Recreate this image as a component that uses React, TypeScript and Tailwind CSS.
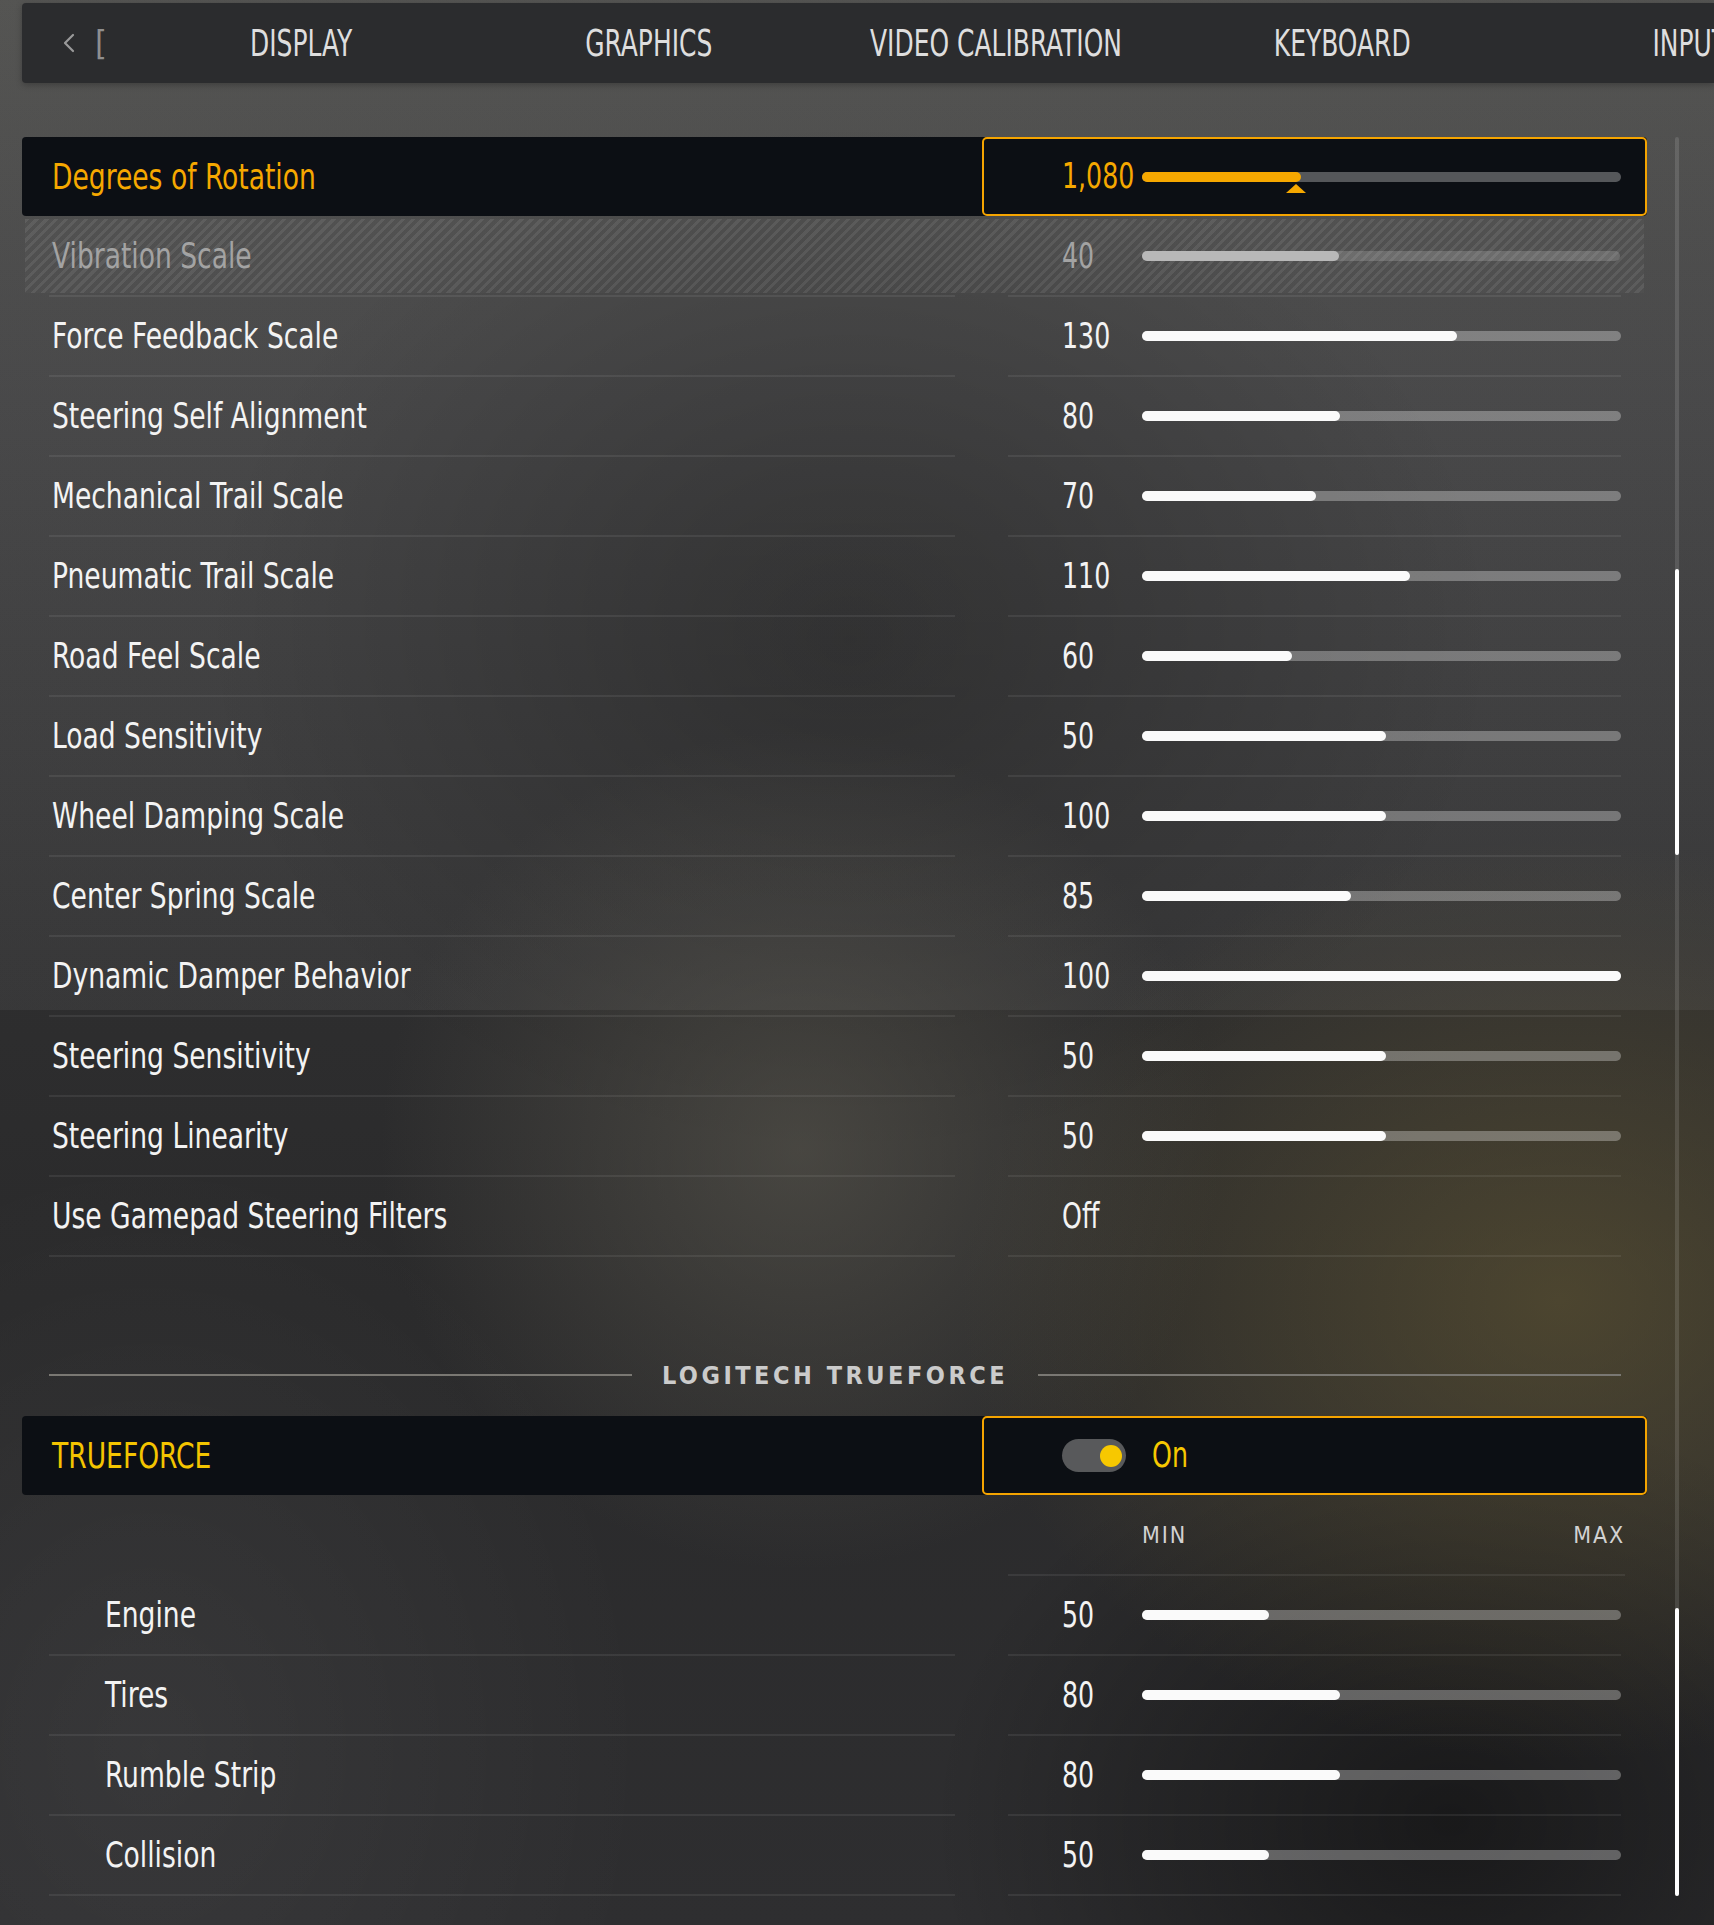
import React from "react";

const FONT = "font-['DejaVu_Sans_Condensed','DejaVu_Sans',sans-serif]";

type Item = { label: string; value: string; pct?: number };

const mainRows: Item[] = [
  { label: "Force Feedback Scale", value: "130", pct: 65.8 },
  { label: "Steering Self Alignment", value: "80", pct: 41.3 },
  { label: "Mechanical Trail Scale", value: "70", pct: 36.3 },
  { label: "Pneumatic Trail Scale", value: "110", pct: 55.9 },
  { label: "Road Feel Scale", value: "60", pct: 31.4 },
  { label: "Load Sensitivity", value: "50", pct: 51 },
  { label: "Wheel Damping Scale", value: "100", pct: 51 },
  { label: "Center Spring Scale", value: "85", pct: 43.7 },
  { label: "Dynamic Damper Behavior", value: "100", pct: 100 },
  { label: "Steering Sensitivity", value: "50", pct: 51 },
  { label: "Steering Linearity", value: "50", pct: 51 },
  { label: "Use Gamepad Steering Filters", value: "Off" },
];

const subRows: Item[] = [
  { label: "Engine", value: "50", pct: 26.5 },
  { label: "Tires", value: "80", pct: 41.4 },
  { label: "Rumble Strip", value: "80", pct: 41.3 },
  { label: "Collision", value: "50", pct: 26.5 },
];

function Label({ children, className = "" }: { children: React.ReactNode; className?: string }) {
  return (
    <span className={`inline-block origin-left scale-x-[0.82] whitespace-nowrap text-[36px] leading-none ${className}`}>
      {children}
    </span>
  );
}

function Value({ children, className = "" }: { children: React.ReactNode; className?: string }) {
  return (
    <span className={`inline-block origin-left scale-x-[0.78] whitespace-nowrap text-[36px] leading-none ${className}`}>
      {children}
    </span>
  );
}

function Track({ pct, fill = "bg-[#fafafa]", track = "bg-white/30" }: { pct: number; fill?: string; track?: string }) {
  return (
    <div className={`h-[10px] flex-1 rounded-full ${track}`}>
      <div className={`h-full rounded-full ${fill}`} style={{ width: `${pct}%` }} />
    </div>
  );
}

function Row({ item, indent = false }: { item: Item; indent?: boolean }) {
  return (
    <div className="flex h-[80px]">
      <div className="flex w-[960px] px-[27px]">
        <div
          className={`flex flex-1 items-center border-b-2 border-white/[0.07] ${indent ? "pl-[56px]" : "pl-[3px]"}`}
        >
          <Label className="text-[#f3f3f3]">{item.label}</Label>
        </div>
      </div>
      <div className="flex w-[665px] pl-[26px] pr-[26px]">
        <div className="flex flex-1 items-center border-b-2 border-white/[0.07] pl-[54px]">
          <div className="w-[80px]">
            <Value className="text-[#f3f3f3]">{item.value}</Value>
          </div>
          {item.pct !== undefined && <Track pct={item.pct} />}
        </div>
      </div>
    </div>
  );
}

function Chevron() {
  return (
    <svg width="14" height="20" viewBox="0 0 14 20" fill="none">
      <polyline points="11,2 3,10 11,18" stroke="#9a9a9a" strokeWidth="2.2" strokeLinecap="round" strokeLinejoin="round" />
    </svg>
  );
}

export default function App() {
  const tabs = ["DISPLAY", "GRAPHICS", "VIDEO CALIBRATION", "KEYBOARD", "INPUT"];
  return (
    <div
      className={`${FONT} relative h-[1925px] w-[1714px] overflow-hidden bg-[#2c2c2e] bg-[image:linear-gradient(180deg,rgba(255,255,255,0.06)_0px,rgba(255,255,255,0.05)_1010px,transparent_1010px),radial-gradient(600px_460px_at_1560px_1300px,rgba(110,96,52,0.5),transparent),radial-gradient(420px_420px_at_800px_1150px,rgba(95,92,82,0.55),transparent),radial-gradient(650px_520px_at_850px_640px,rgba(0,0,0,0.32),transparent),radial-gradient(520px_420px_at_1450px_1820px,rgba(0,0,0,0.45),transparent),radial-gradient(500px_600px_at_150px_1750px,rgba(255,255,255,0.05),transparent),linear-gradient(180deg,#4a4a48_0px,#3e3e3f_400px,#2e2e2f_950px,#2a2a2b_1300px,#2e2e30_1925px)]`}
    >
      {/* Tab bar */}
      <div className="ml-[22px] mt-[3px] flex h-[80px] items-center rounded-l-[4px] bg-[#2b2c2e] shadow-[0_2px_6px_rgba(0,0,0,0.25)]">
        <div className="flex w-[106px] shrink-0 items-center pl-[40px]">
          <Chevron />
          <span className="ml-[19px] text-[34px] leading-none text-[#8f8f8f]">[</span>
        </div>
        {tabs.map((t) => (
          <div key={t} className="flex w-[347px] shrink-0 justify-center">
            <span className="inline-block origin-center scale-x-[0.75] whitespace-nowrap text-[37px] leading-none text-[#dedede]">
              {t}
            </span>
          </div>
        ))}
      </div>

      {/* Main */}
      <div className="mt-[54px] flex">
        <div className="ml-[22px] flex w-[1625px] flex-col">
          {/* Degrees of Rotation (selected) */}
          <div className="flex h-[80px]">
            <div className="flex h-[79px] w-full rounded-[4px] bg-[#0c0f14]">
              <div className="flex w-[960px] items-center pl-[30px]">
                <Label className="text-[#f6a800]">Degrees of Rotation</Label>
              </div>
              <div className="flex flex-1 items-center rounded-[5px] border-2 border-[#f5a400] pl-[78px] pr-[24px]">
                <div className="w-[80px]">
                  <Value className="text-[#f6a800]">1,080</Value>
                </div>
                <div className="relative h-[10px] flex-1 rounded-full bg-white/30">
                  <div className="h-full rounded-full bg-[#f6a800]" style={{ width: "33.1%" }} />
                  <div
                    className="absolute top-[12px] h-0 w-0 border-x-[10px] border-b-[9px] border-x-transparent border-b-[#f6a800]"
                    style={{ left: "calc(33.1% - 15px)" }}
                  />
                </div>
              </div>
            </div>
          </div>

          {/* Vibration Scale (disabled) */}
          <div className="flex h-[80px] flex-col pt-[2px]">
            <div className="mx-[3px] flex h-[74px] items-center bg-white/[0.02] bg-[image:repeating-linear-gradient(135deg,rgba(255,255,255,0.075)_0px,rgba(255,255,255,0.075)_3px,transparent_3px,transparent_7px)]">
              <div className="w-[957px] pl-[27px]">
                <Label className="text-[#a3a3a3]">Vibration Scale</Label>
              </div>
              <div className="flex flex-1 items-center pl-[80px] pr-[24px]">
                <div className="w-[80px]">
                  <Value className="text-[#a3a3a3]">40</Value>
                </div>
                <Track pct={41.3} fill="bg-[#b8b8b8]" track="bg-white/[0.16]" />
              </div>
            </div>
            <div className="mt-[2px] flex h-[2px]">
              <div className="ml-[27px] w-[906px] bg-white/[0.07]" />
              <div className="ml-[53px] w-[613px] bg-white/[0.07]" />
            </div>
          </div>

          {mainRows.map((r) => (
            <Row key={r.label} item={r} />
          ))}

          {/* Section header */}
          <div className="mt-[98px] flex h-[40px] items-center pl-[27px] pr-[26px]">
            <div className="h-[2px] flex-1 bg-[#7a7873]" />
            <div className="whitespace-nowrap px-[30px] text-[25px] font-bold leading-none tracking-[0.14em] text-[#cbcbcb]">
              LOGITECH TRUEFORCE
            </div>
            <div className="h-[2px] flex-1 bg-[#7a7873]" />
          </div>

          {/* TRUEFORCE toggle (selected) */}
          <div className="mt-[21px] flex h-[80px]">
            <div className="flex h-[79px] w-full rounded-[4px] bg-[#0c0f14]">
              <div className="flex w-[960px] items-center pl-[30px]">
                <Label className="text-[#f4c400]">TRUEFORCE</Label>
              </div>
              <div className="flex flex-1 items-center rounded-[5px] border-2 border-[#f5a400] pl-[78px]">
                <div className="flex h-[33px] w-[64px] items-center justify-end rounded-full bg-[#58595b] pr-[4px]">
                  <div className="h-[22px] w-[22px] rounded-full bg-[#f7c800]" />
                </div>
                <div className="ml-[26px]">
                  <Value className="text-[#f7c800]">On</Value>
                </div>
              </div>
            </div>
          </div>

          {/* MIN / MAX */}
          <div className="flex h-[80px]">
            <div className="w-[960px]" />
            <div className="flex w-[665px] pl-[26px] pr-[22px]">
              <div className="flex flex-1 items-center justify-between border-b-2 border-white/[0.07] pl-[134px] text-[23px] leading-none tracking-[0.08em] text-[#d2d2d2]">
                <span>MIN</span>
                <span>MAX</span>
              </div>
            </div>
          </div>

          {subRows.map((r) => (
            <Row key={r.label} item={r} indent />
          ))}
        </div>

        {/* Scrollbar */}
        <div className="ml-[28px] flex w-[4px] flex-col rounded-full bg-white/[0.12]">
          <div className="h-[432px]" />
          <div className="h-[286px] rounded-full bg-white" />
          <div className="h-[753px]" />
          <div className="h-[288px] rounded-full bg-white" />
        </div>
      </div>
    </div>
  );
}
